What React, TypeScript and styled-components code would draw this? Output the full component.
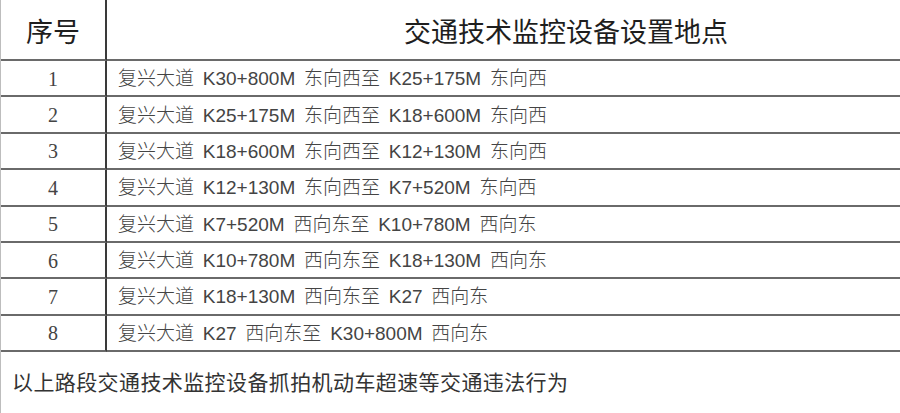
import React from "react";
import styled, { createGlobalStyle } from "styled-components";

const GlobalStyle = createGlobalStyle`
  html, body { margin: 0; padding: 0; background: #ffffff; }
  body { width: 900px; height: 413px; overflow: hidden; }
`;

const Page = styled.div`
  width: 900px;
  height: 413px;
  display: flex;
  flex-direction: column;
  background: #fff;
  border-left: 1px solid #bdbdbd;
  box-sizing: border-box;
`;

const Table = styled.div`
  display: grid;
  grid-template-columns: 106px 1fr;
  grid-template-rows: 61px repeat(8, 36.375px);
`;

const Cell = styled.div<{ $first?: boolean; $head?: boolean }>`
  display: flex;
  align-items: center;
  box-sizing: border-box;
  border-bottom: 2px solid #6a6a6a;
  border-right: ${(p) => (p.$first ? "2px solid #3a3a3a" : "none")};
  justify-content: ${(p) => (p.$first ? "center" : "flex-start")};
  padding-left: ${(p) => (p.$first ? "0" : p.$head ? "297px" : "11px")};
  padding-top: 1px;
`;

const HeadText = styled.span`
  font-family: "Noto Sans CJK SC", "Noto Sans", sans-serif;
  font-size: 27px;
  font-weight: 400;
  color: #1e1e1e;
  line-height: 1;
`;

const NumText = styled.span`
  font-family: "Liberation Serif", "DejaVu Serif", serif;
  font-size: 20px;
  color: #444;
  line-height: 1;
`;

const RowText = styled.span`
  font-family: "Liberation Sans", "Noto Sans CJK SC", sans-serif;
  font-size: 19px;
  font-weight: 300;
  color: #444;
  word-spacing: 3.5px;
  line-height: 1;
  white-space: nowrap;
`;

const Footer = styled.div`
  flex: 1;
  display: flex;
  align-items: center;
  padding-left: 11px;
  padding-bottom: 3px;
`;

const FootText = styled.span`
  font-family: "Noto Sans CJK SC", sans-serif;
  font-size: 21px;
  letter-spacing: 0.4px;
  color: #333;
  line-height: 1;
`;

const rows = [
  "复兴大道 K30+800M 东向西至 K25+175M 东向西",
  "复兴大道 K25+175M 东向西至 K18+600M 东向西",
  "复兴大道 K18+600M 东向西至 K12+130M 东向西",
  "复兴大道 K12+130M 东向西至 K7+520M 东向西",
  "复兴大道 K7+520M 西向东至 K10+780M 西向东",
  "复兴大道 K10+780M 西向东至 K18+130M 西向东",
  "复兴大道 K18+130M 西向东至 K27 西向东",
  "复兴大道 K27 西向东至 K30+800M 西向东",
];

export default function App() {
  return (
    <>
      <GlobalStyle />
      <Page>
        <Table>
          <Cell $first $head>
            <HeadText>序号</HeadText>
          </Cell>
          <Cell $head>
            <HeadText>交通技术监控设备设置地点</HeadText>
          </Cell>
          {rows.map((r, i) => (
            <React.Fragment key={i}>
              <Cell $first>
                <NumText>{i + 1}</NumText>
              </Cell>
              <Cell>
                <RowText>{r}</RowText>
              </Cell>
            </React.Fragment>
          ))}
        </Table>
        <Footer>
          <FootText>以上路段交通技术监控设备抓拍机动车超速等交通违法行为</FootText>
        </Footer>
      </Page>
    </>
  );
}
